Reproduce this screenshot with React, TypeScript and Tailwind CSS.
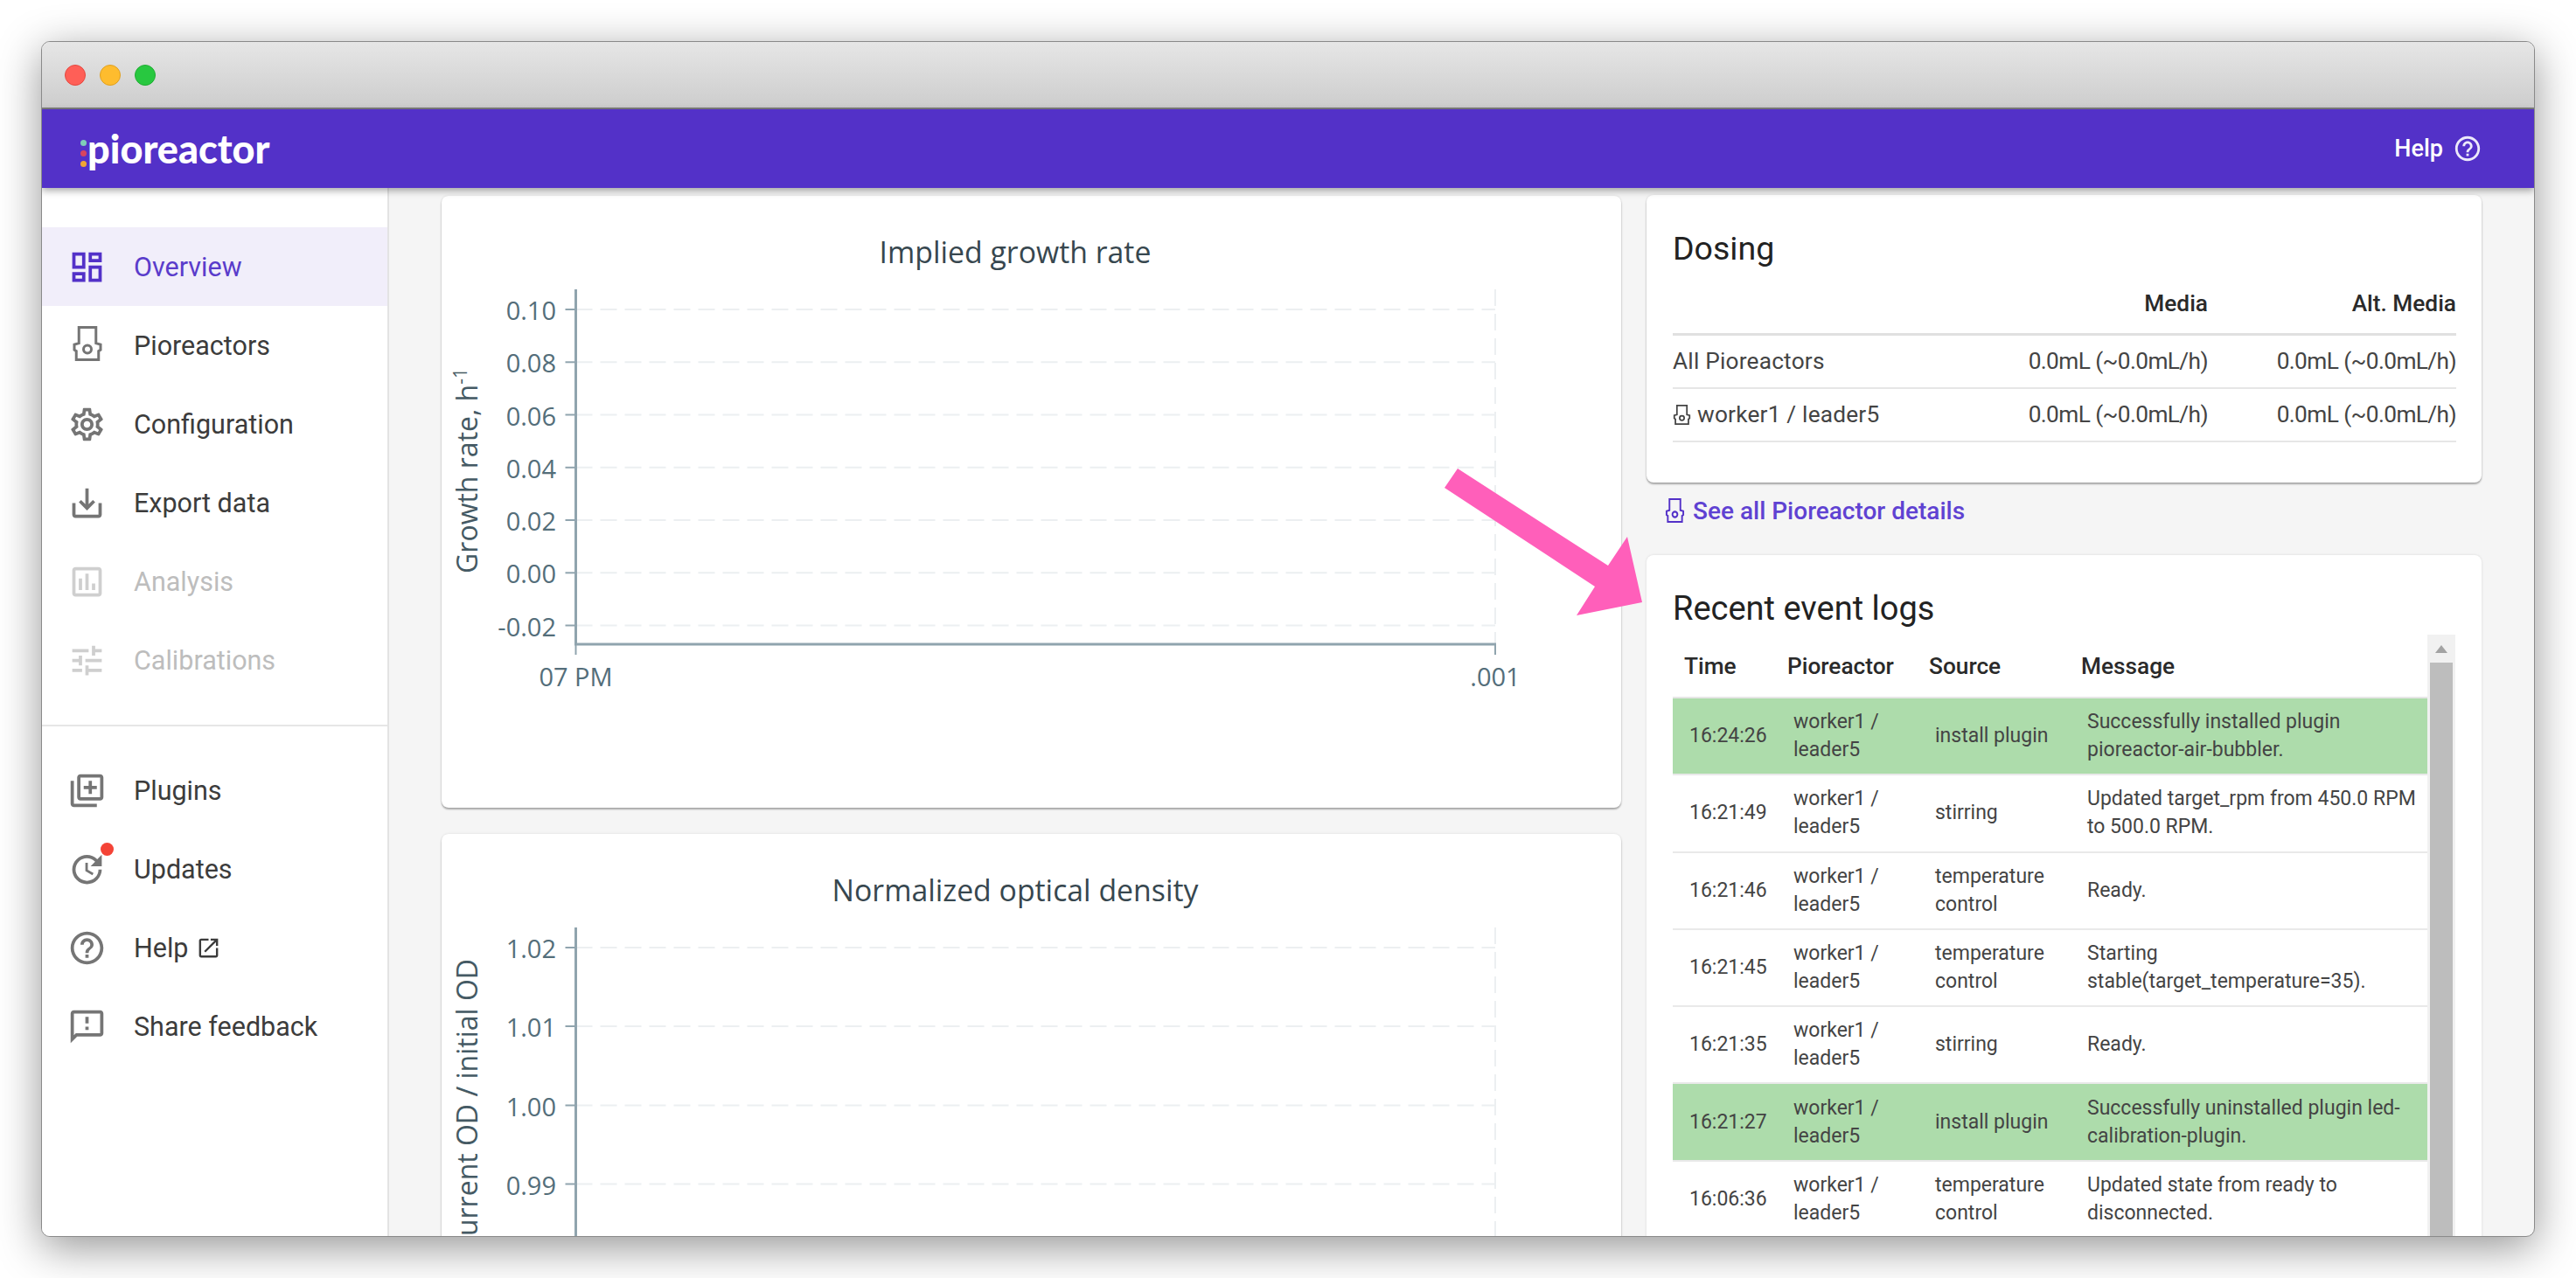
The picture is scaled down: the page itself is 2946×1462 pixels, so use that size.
import type { ReactNode } from "react";

const ICONS = {
  overview:
    "M19 5v2h-4V5h4M9 5v6H5V5h4m10 8v6h-4v-6h4M9 17v2H5v-2h4M21 3h-8v6h8V3zM11 3H3v10h8V3zm10 8h-8v10h8V11zm-10 4H3v6h8v-6z",
  gear:
    "M19.43 12.98c.04-.32.07-.64.07-.98 0-.34-.03-.66-.07-.98l2.11-1.65c.19-.15.24-.42.12-.64l-2-3.46c-.09-.16-.26-.25-.44-.25-.06 0-.12.01-.17.03l-2.49 1c-.52-.4-1.08-.73-1.69-.98l-.38-2.65C14.46 2.18 14.25 2 14 2h-4c-.25 0-.46.18-.49.42l-.38 2.65c-.61.25-1.17.59-1.69.98l-2.49-1c-.06-.02-.12-.03-.18-.03-.17 0-.34.09-.43.25l-2 3.46c-.13.22-.07.49.12.64l2.11 1.65c-.04.32-.07.65-.07.98 0 .33.03.66.07.98l-2.11 1.65c-.19.15-.24.42-.12.64l2 3.46c.09.16.26.25.44.25.06 0 .12-.01.17-.03l2.49-1c.52.4 1.08.73 1.69.98l.38 2.65c.03.24.24.42.49.42h4c.25 0 .46-.18.49-.42l.38-2.65c.61-.25 1.17-.59 1.69-.98l2.49 1c.06.02.12.03.18.03.17 0 .34-.09.43-.25l2-3.46c.12-.22.07-.49-.12-.64l-2.11-1.65zm-1.98-1.71c.04.31.05.52.05.73 0 .21-.02.43-.05.73l-.14 1.13.89.7 1.08.84-.7 1.21-1.27-.51-1.04-.42-.9.68c-.43.32-.84.56-1.25.73l-1.06.43-.16 1.13-.2 1.35h-1.4l-.19-1.35-.16-1.13-1.06-.43c-.43-.18-.83-.41-1.23-.71l-.91-.7-1.06.43-1.27.51-.7-1.21 1.08-.84.89-.7-.14-1.13c-.03-.31-.05-.54-.05-.74s.02-.43.05-.73l.14-1.13-.89-.7-1.08-.84.7-1.21 1.27.51 1.04.42.9-.68c.43-.32.84-.56 1.25-.73l1.06-.43.16-1.13.2-1.35h1.39l.19 1.35.16 1.13 1.06.43c.43.18.83.41 1.23.71l.91.7 1.06-.43 1.27-.51.7 1.21-1.07.85-.89.7.14 1.13zM12 8c-2.21 0-4 1.79-4 4s1.79 4 4 4 4-1.79 4-4-1.79-4-4-4zm0 6c-1.1 0-2-.9-2-2s.9-2 2-2 2 .9 2 2-.9 2-2 2z",
  save: "M19 12v7H5v-7H3v7c0 1.1.9 2 2 2h14c1.1 0 2-.9 2-2v-7h-2zm-6 .67l2.59-2.58L17 11.5l-5 5-5-5 1.41-1.41L11 12.67V3h2z",
  chart:
    "M9 17H7v-7h2v7zm4 0h-2V7h2v10zm4 0h-2v-4h2v4zm2 2H5V5h14v14.1V19zm0-16H5c-1.1 0-2 .9-2 2v14c0 1.1.9 2 2 2h14c1.1 0 2-.9 2-2V5c0-1.1-.9-2-2-2z",
  tune: "M3 17v2h6v-2H3zM3 5v2h10V5H3zm10 16v-2h8v-2h-8v-2h-2v6h2zM7 9v2H3v2h4v2h2V9H7zm14 4v-2H11v2h10zm-6-4h2V7h4V5h-4V3h-2v6z",
  library:
    "M4 6H2v14c0 1.1.9 2 2 2h14v-2H4V6zm16-4H8c-1.1 0-2 .9-2 2v12c0 1.1.9 2 2 2h12c1.1 0 2-.9 2-2V4c0-1.1-.9-2-2-2zm0 14H8V4h12v12zm-7-2h2v-3h3V9h-3V6h-2v3h-3v2h3z",
  update:
    "M21 10.12h-6.78l2.74-2.82c-2.73-2.7-7.15-2.8-9.88-.1-2.73 2.71-2.73 7.08 0 9.79s7.15 2.71 9.88 0C18.32 15.65 19 14.08 19 12.1h2c0 1.98-.88 4.55-2.64 6.29-3.51 3.48-9.21 3.48-12.72 0-3.5-3.47-3.53-9.11-.02-12.58s9.14-3.47 12.65 0L21 3v7.12zM12.5 8v4.25l3.5 2.08-.72 1.21L11 13V8h1.5z",
  help: "M11 18h2v-2h-2v2zm1-16C6.48 2 2 6.48 2 12s4.48 10 10 10 10-4.48 10-10S17.52 2 12 2zm0 18c-4.41 0-8-3.59-8-8s3.59-8 8-8 8 3.59 8 8-3.59 8-8 8zm0-14c-2.21 0-4 1.79-4 4h2c0-1.1.9-2 2-2s2 .9 2 2c0 2-3 1.75-3 5h2c0-2.25 3-2.5 3-5 0-2.21-1.79-4-4-4z",
  feedback:
    "M20 2H4c-1.1 0-1.99.9-1.99 2L2 22l4-4h14c1.1 0 2-.9 2-2V4c0-1.1-.9-2-2-2zm0 14H5.17L4 17.17V4h16v12zm-9-4h2v2h-2zm0-6h2v4h-2z",
  external:
    "M19 19H5V5h7V3H5c-1.11 0-2 .9-2 2v14c0 1.1.89 2 2 2h14c1.1 0 2-.9 2-2v-7h-2v7zM14 3v2h3.59l-9.83 9.83 1.41 1.41L19 6.41V10h2V3h-7z",
};

function MuiIcon({ d, className }: { d: string; className: string }) {
  return (
    <svg viewBox="0 0 24 24" fill="currentColor" className={className}>
      <path d={d} />
    </svg>
  );
}

// the bioreactor glyph the app uses in place of a stock icon
function PioreactorIcon({ className }: { className: string }) {
  return (
    <svg
      viewBox="0 0 24 26.5"
      preserveAspectRatio="none"
      fill="none"
      stroke="currentColor"
      strokeWidth="2"
      className={className}
    >
      <path d="M5.5 1 H18.5 V13 L22 14 V18 L20.5 19 V25.5 H3.5 V19 L2 18 V14 L5.5 13 Z" />
      <circle cx="12" cy="17.5" r="3" />
    </svg>
  );
}

const topNav = [
  { label: "Overview", icon: ICONS.overview, active: true },
  { label: "Pioreactors", reactor: true },
  { label: "Configuration", icon: ICONS.gear },
  { label: "Export data", icon: ICONS.save },
  { label: "Analysis", icon: ICONS.chart, disabled: true },
  { label: "Calibrations", icon: ICONS.tune, disabled: true },
];

const bottomNav = [
  { label: "Plugins", icon: ICONS.library },
  { label: "Updates", icon: ICONS.update, dot: true },
  { label: "Help", icon: ICONS.help, external: true },
  { label: "Share feedback", icon: ICONS.feedback },
];

type NavEntry = {
  label: string;
  icon?: string;
  reactor?: boolean;
  active?: boolean;
  disabled?: boolean;
  dot?: boolean;
  external?: boolean;
};

function NavItem({ item }: { item: NavEntry }) {
  const tone = item.active
    ? "bg-[#f1eefa] text-[#5a3ccb]"
    : item.disabled
      ? "text-[#bdbdbd]"
      : "text-[#3c3c3c]";
  const iconTone = item.active ? "text-[#5331c8]" : item.disabled ? "text-[#cfcfcf]" : "text-[#757575]";
  return (
    <div className={`flex h-[90px] items-center pl-[29px] text-[30.5px] ${tone}`}>
      <div className={`relative mr-[31px] h-[45px] w-[45px] shrink-0 ${iconTone}`}>
        {item.reactor ? (
          <PioreactorIcon className="h-[40px] w-[36px] translate-x-[5px] overflow-visible" />
        ) : (
          <MuiIcon d={item.icon ?? ""} className="h-[45px] w-[45px]" />
        )}
        {item.dot && (
          <span className="absolute top-[-8px] right-[-8px] h-[15px] w-[15px] rounded-full bg-[#f44336]" />
        )}
      </div>
      <span className="pt-[2px]">{item.label}</span>
      {item.external && <MuiIcon d={ICONS.external} className="ml-[9px] h-[29px] w-[29px] text-[#3c3c3c]" />}
    </div>
  );
}

function Sidebar() {
  return (
    <aside className="w-[397px] shrink-0 border-r-2 border-[#e3e3e3] bg-white pt-[45px]">
      {topNav.map((item) => (
        <NavItem key={item.label} item={item} />
      ))}
      <div className="mt-[29px] mb-[28px] h-[2px] bg-[#e6e6e6]" />
      {bottomNav.map((item) => (
        <NavItem key={item.label} item={item} />
      ))}
    </aside>
  );
}

type ChartProps = {
  title: string;
  ticks: { label: string; y: number }[];
  axisBottom?: number;
  yLabelTop: number;
  yLabel: ReactNode;
};

const AXIS_X = 153.5;
const AXIS_TOP = 107;
const GRID_END = 1205;
const TICK_SIZE = 29;

function ChartCard({ title, ticks, axisBottom, yLabelTop, yLabel }: ChartProps) {
  return (
    <div className="h-[700px] w-[1349px] shrink-0 rounded-[8px] bg-white shadow-[0_2px_2px_rgba(0,0,0,0.3),0_0_3px_rgba(0,0,0,0.1)]">
      <svg viewBox="0 0 1349 700" className="h-[700px] w-[1349px] font-['Open_Sans',sans-serif]">
        <text x="656" y="77" textAnchor="middle" fontSize="33.8" fill="#37474f">
          {title}
        </text>
        <text
          transform={`translate(41 ${yLabelTop}) rotate(-90)`}
          textAnchor="end"
          fontSize="32"
          fill="#455a64"
        >
          {yLabel}
        </text>
        <line x1={GRID_END} y1={AXIS_TOP} x2={GRID_END} y2={axisBottom ?? 700} stroke="#eceff1" strokeWidth="2" strokeDasharray="19 9" />
        {ticks.map((t) => (
          <g key={t.label}>
            <line x1={AXIS_X} y1={t.y} x2={GRID_END} y2={t.y} stroke="#eceff1" strokeWidth="2" strokeDasharray="19 9" />
            <line x1={AXIS_X - 12} y1={t.y} x2={AXIS_X} y2={t.y} stroke="#90a4ae" strokeWidth="2" />
            <text x="131" y={t.y + 12} textAnchor="end" fontSize={TICK_SIZE} fill="#546e7a">
              {t.label}
            </text>
          </g>
        ))}
        <line x1={AXIS_X} y1={AXIS_TOP} x2={AXIS_X} y2={axisBottom ?? 700} stroke="#90a4ae" strokeWidth="3" />
        {axisBottom !== undefined && (
          <>
            <line x1={AXIS_X - 1.5} y1={axisBottom} x2={GRID_END + 1} y2={axisBottom} stroke="#90a4ae" strokeWidth="3" />
            <line x1={AXIS_X} y1={axisBottom} x2={AXIS_X} y2={axisBottom + 12} stroke="#90a4ae" strokeWidth="2" />
            <line x1={GRID_END} y1={axisBottom} x2={GRID_END} y2={axisBottom + 12} stroke="#90a4ae" strokeWidth="2" />
            <text x={AXIS_X} y={axisBottom + 48} textAnchor="middle" fontSize={TICK_SIZE} fill="#546e7a">
              07 PM
            </text>
            <text x={GRID_END} y={axisBottom + 48} textAnchor="middle" fontSize={TICK_SIZE} fill="#546e7a">
              .001
            </text>
          </>
        )}
      </svg>
    </div>
  );
}

const dosingRows = [
  { name: "All Pioreactors", value: "0.0mL (~0.0mL/h)" },
  { name: "worker1 / leader5", value: "0.0mL (~0.0mL/h)", reactor: true },
];

function DosingCard() {
  return (
    <div className="h-[329px] rounded-[8px] bg-white pt-[39px] pr-[29px] pl-[30px] shadow-[0_2px_2px_rgba(0,0,0,0.3),0_0_3px_rgba(0,0,0,0.1)]">
      <h2 className="text-[37.5px] leading-[45px] text-[#222]">Dosing</h2>
      <div className="mt-[7px] grid h-[70px] grid-cols-[1fr_284px_284px] items-center border-b-[3px] border-[#e0e0e0] text-right text-[26.25px] font-medium text-[#2a2a2a]">
        <span />
        <span>Media</span>
        <span>Alt. Media</span>
      </div>
      {dosingRows.map((row) => (
        <div
          key={row.name}
          className="grid h-[61px] grid-cols-[1fr_284px_284px] items-center border-b-2 border-[#e6e6e6] text-[26.25px] text-[#444]"
        >
          <span className="flex items-center tracking-[0.2px]">
            {row.reactor && <PioreactorIcon className="mr-[7px] h-[23px] w-[21px] overflow-visible" />}
            {row.name}
          </span>
          <span className="text-right tracking-[-0.6px]">{row.value}</span>
          <span className="text-right tracking-[-0.6px]">{row.value}</span>
        </div>
      ))}
    </div>
  );
}

const logs = [
  { time: "16:24:26", source: "install plugin", message: "Successfully installed plugin\npioreactor-air-bubbler.", ok: true },
  { time: "16:21:49", source: "stirring", message: "Updated target_rpm from 450.0 RPM\nto 500.0 RPM." },
  { time: "16:21:46", source: "temperature\ncontrol", message: "Ready." },
  { time: "16:21:45", source: "temperature\ncontrol", message: "Starting\nstable(target_temperature=35)." },
  { time: "16:21:35", source: "stirring", message: "Ready." },
  { time: "16:21:27", source: "install plugin", message: "Successfully uninstalled plugin led-\ncalibration-plugin.", ok: true },
  { time: "16:06:36", source: "temperature\ncontrol", message: "Updated state from ready to\ndisconnected." },
];

function LogsCard() {
  return (
    <div className="flex h-[800px] flex-col rounded-[8px] bg-white pt-[39px] pr-[29px] pl-[30px] shadow-[0_0_3px_rgba(0,0,0,0.12)]">
      <h2 className="text-[38px] leading-[45px] text-[#222]">Recent event logs</h2>
      <div className="mt-[7px] flex min-h-0 flex-1">
        <div className="w-[863px] shrink-0">
          <div className="grid h-[73px] grid-cols-[131px_162px_174px_396px] items-center border-b-2 border-[#e6e6e6] text-[26.25px] leading-[30px] font-medium text-[#2a2a2a]">
            <span className="pl-[13px]">Time</span>
            <span>Pioreactor</span>
            <span>Source</span>
            <span>Message</span>
          </div>
          {logs.map((row) => (
            <div
              key={row.time}
              className={`grid h-[88.3px] grid-cols-[131px_162px_174px_396px] items-center border-b-2 border-[#e9e9e9] text-[23px] leading-[32px] whitespace-pre-line text-[#444] ${row.ok ? "bg-[#addcab]" : ""}`}
            >
              <span className="pl-[19px]">{row.time}</span>
              <span className="pl-[7px]">{"worker1 /\nleader5"}</span>
              <span className="pl-[7px]">{row.source}</span>
              <span className="pl-[7px]">{row.message}</span>
            </div>
          ))}
        </div>
        <div className="flex w-[32px] shrink-0 flex-col bg-[#f1f1f1]">
          <div className="flex h-[32px] items-center justify-center">
            <span className="h-0 w-0 border-x-[7px] border-b-[9px] border-x-transparent border-b-[#a3a3a3]" />
          </div>
          <div className="mx-[3px] flex-1 bg-[#bdbdbd]" />
        </div>
      </div>
    </div>
  );
}

export default function App() {
  return (
    <div className="relative h-[1462px] w-[2946px] overflow-hidden bg-white pt-[47px] pl-[47px] font-['Roboto',sans-serif]">
      <div className="flex h-[1368px] w-[2852px] flex-col overflow-hidden rounded-[10px] border border-[#8a8a8a] bg-[#f5f5f5] shadow-[0_12px_50px_rgba(0,0,0,0.42)]">
        <div className="flex h-[77px] shrink-0 items-center gap-[16px] border-b-2 border-[#7d7d7d] bg-gradient-to-b from-[#e6e6e6] to-[#cdcdcd] pl-[26px]">
          <span className="h-[24px] w-[24px] rounded-full border border-[#e5483f] bg-[#ff5f57]" />
          <span className="h-[24px] w-[24px] rounded-full border border-[#e0a020] bg-[#febc2e]" />
          <span className="h-[24px] w-[24px] rounded-full border border-[#20ad33] bg-[#28c840]" />
        </div>

        <header className="relative z-10 flex h-[90px] shrink-0 items-center justify-between bg-[#5331c8] pr-[59px] pl-[44px] shadow-[0_3px_8px_rgba(0,0,0,0.35)]">
          <div className="flex items-center">
            <div className="mt-[10px] mr-[1px] flex flex-col gap-[5px]">
              <span className="h-[7px] w-[7px] rounded-full bg-[#7fcdb8]" />
              <span className="h-[7px] w-[7px] rounded-full bg-[#d8455f]" />
              <span className="h-[7px] w-[7px] rounded-full bg-[#f0a534]" />
            </div>
            <span className="font-['Lato',sans-serif] text-[45px] leading-none font-black text-white">pioreactor</span>
          </div>
          <div className="flex items-center gap-[11px] text-[27px] font-medium text-white">
            <span>Help</span>
            <MuiIcon d={ICONS.help} className="h-[34px] w-[34px] text-[#ece9fa]" />
          </div>
        </header>

        <div className="flex min-h-0 flex-1">
          <Sidebar />
          <main className="flex min-w-0 flex-1 items-start gap-[29px] overflow-hidden pt-[8px] pl-[60px]">
            <div className="mt-[1px] flex shrink-0 flex-col gap-[30px]">
              <ChartCard
                title="Implied growth rate"
                axisBottom={513}
                yLabelTop={197}
                yLabel={
                  <>
                    Growth rate, h
                    <tspan dy="-12" fontSize="21">
                      -1
                    </tspan>
                  </>
                }
                ticks={[
                  { label: "0.10", y: 130 },
                  { label: "0.08", y: 190.3 },
                  { label: "0.06", y: 250.5 },
                  { label: "0.04", y: 310.8 },
                  { label: "0.02", y: 371 },
                  { label: "0.00", y: 431.3 },
                  { label: "-0.02", y: 491.5 },
                ]}
              />
              <ChartCard
                title="Normalized optical density"
                yLabelTop={143}
                yLabel="Current OD / initial OD"
                ticks={[
                  { label: "1.02", y: 130 },
                  { label: "1.01", y: 220 },
                  { label: "1.00", y: 310.5 },
                  { label: "0.99", y: 400.5 },
                ]}
              />
            </div>

            <div className="w-[955px] shrink-0">
              <DosingCard />
              <div className="flex h-[83px] items-start pt-[18px] pl-[21px] text-[28px] leading-[30px] font-medium text-[#5f42d2]">
                <PioreactorIcon className="mr-[9px] h-[28px] w-[23px] overflow-visible text-[#5331c8]" />
                <span>See all Pioreactor details</span>
              </div>
              <LogsCard />
            </div>
          </main>
        </div>
      </div>

      {/* annotation arrow laid over the screenshot */}
      <svg viewBox="0 0 2946 1462" className="pointer-events-none absolute inset-0 h-[1462px] w-[2946px]">
        <polygon
          points="1667,536 1652,558 1824,671 1803,704 1878,689 1861,614 1839,647"
          fill="#ff5fba"
        />
      </svg>
    </div>
  );
}
